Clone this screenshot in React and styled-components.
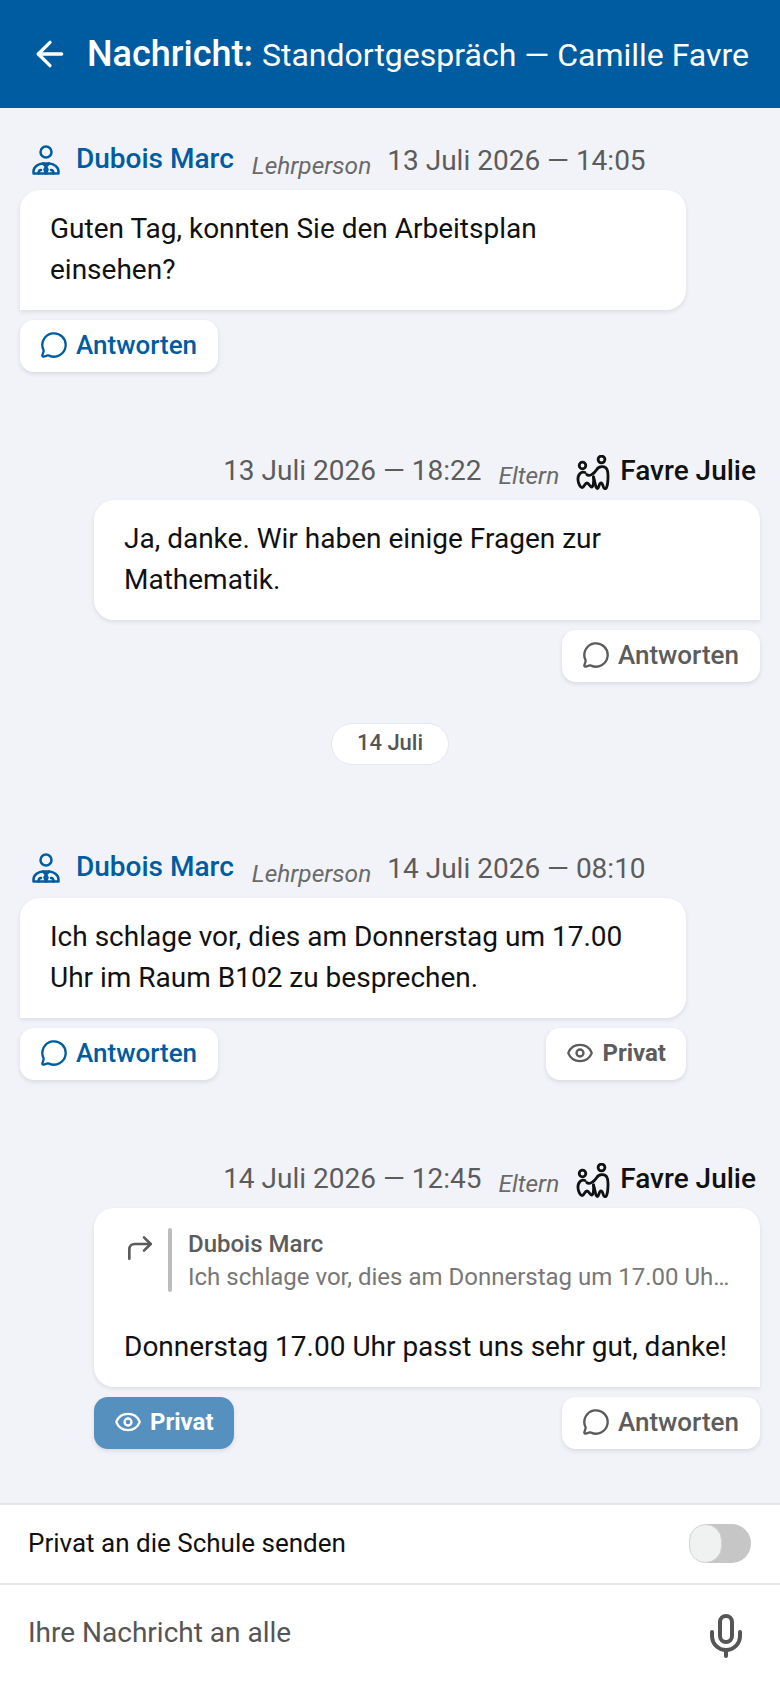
import React from 'react';
import styled, { createGlobalStyle } from 'styled-components';
import { ArrowLeft, CornerUpRight, Eye, MessageCircle, Mic } from 'lucide-react';

const GlobalStyle = createGlobalStyle`
  * { box-sizing: border-box; }
  html, body { margin: 0; padding: 0; }
  body {
    font-family: Roboto, "Liberation Sans", sans-serif;
    background: #f1f3f8;
  }
`;

const Page = styled.div`
  width: 780px;
  height: 1688px;
  display: flex;
  flex-direction: column;
  overflow: hidden;
  background: #f1f3f8;
`;

const Header = styled.header`
  height: 108px;
  flex: none;
  display: flex;
  align-items: center;
  gap: 17px;
  padding: 0 0 0 30px;
  background: #005ca1;
  color: #fff;
`;

const Title = styled.div`
  font-size: 32px;
  white-space: nowrap;
  b {
    font-size: 36px;
    font-weight: 500;
    margin-right: 9px;
  }
`;

const Thread = styled.main`
  flex: 1;
  padding: 32px 20px 0;
  display: flex;
  flex-direction: column;
`;

const Message = styled.section`
  width: 666px;
  align-self: ${(p) => (p.$mine ? 'flex-end' : 'flex-start')};
  margin-bottom: ${(p) => p.$gap}px;
`;

const MetaRow = styled.div`
  height: 40px;
  display: flex;
  align-items: center;
  justify-content: ${(p) => (p.$mine ? 'flex-end' : 'flex-start')};
  padding: ${(p) => (p.$mine ? '0 4px 0 0' : '0 0 0 12px')};
  white-space: nowrap;
`;

const Author = styled.span`
  font-size: 28px;
  font-weight: 500;
  color: ${(p) => (p.$mine ? '#111' : '#005ca1')};
  margin: ${(p) => (p.$mine ? '0 0 0 10px' : '0 0 4px 16px')};
`;

const Role = styled.span`
  font-size: 24.5px;
  font-style: italic;
  color: #6a6a6a;
  position: relative;
  top: 5px;
  margin: ${(p) => (p.$mine ? '0 17px 0 17px' : '0 16px 0 18px')};
`;

const Stamp = styled.span`
  font-size: 28px;
  color: #5c5c5c;
`;

const Bubble = styled.div`
  margin-top: 10px;
  padding: 18px 30px 20px;
  background: #fff;
  border-radius: 20px;
  ${(p) => (p.$mine ? 'border-bottom-right-radius: 0;' : 'border-bottom-left-radius: 0;')}
  box-shadow: 0 2px 4px rgba(30, 40, 70, 0.1);
  font-size: 28px;
  line-height: 41px;
  color: #111;
`;

const Actions = styled.div`
  margin-top: 10px;
  display: flex;
  justify-content: ${(p) => p.$justify};
`;

const ActionButton = styled.button`
  height: 52px;
  display: flex;
  align-items: center;
  gap: 8px;
  padding: ${(p) => (p.$small ? '0 20px 2px' : '0 21px 2px 20px')};
  border: 0;
  border-radius: 14px;
  font-family: inherit;
  font-size: ${(p) => (p.$small ? 24 : 26)}px;
  font-weight: ${(p) => (p.$small ? 700 : 500)};
  color: ${(p) => (p.$active ? '#fff' : p.$color)};
  background: ${(p) => (p.$active ? '#5590bf' : '#fff')};
  box-shadow: 0 2px 4px rgba(30, 40, 70, 0.12);
`;

const DayPill = styled.div`
  align-self: center;
  width: 118px;
  height: 42px;
  margin: 0 0 83px;
  padding-bottom: 3px;
  display: flex;
  align-items: center;
  justify-content: center;
  background: #fff;
  border: 1px solid #e6e8ee;
  border-radius: 21px;
  font-size: 22px;
  font-weight: 500;
  color: #555;
`;

const Quote = styled.div`
  display: flex;
  align-items: flex-start;
  margin: 2px -4px 32px 0;
  color: #5c5c5c;
`;

const QuoteArrow = styled(CornerUpRight)`
  flex: none;
  margin-top: 4px;
`;

const QuoteBar = styled.div`
  flex: none;
  width: 4px;
  height: 64px;
  margin: 0 16px 0 12px;
  background: #bcbcbc;
  border-radius: 2px;
`;

const QuoteBody = styled.div`
  min-width: 0;
  flex: 1;
  font-size: 24px;
  line-height: 33px;
`;

const QuoteName = styled.div`
  font-weight: 500;
`;

const QuoteText = styled.div`
  color: #777;
  white-space: nowrap;
  overflow: hidden;
  text-overflow: ellipsis;
`;

const Footer = styled.footer`
  flex: none;
  background: #fff;
`;

const ToggleRow = styled.div`
  height: 82px;
  display: flex;
  align-items: center;
  justify-content: space-between;
  padding: 0 29px 2px 28px;
  border-top: 2px solid #e5e6ea;
  border-bottom: 2px solid #e5e6ea;
  font-size: 26px;
  color: #111;
`;

const Toggle = styled.div`
  width: 62px;
  height: 39px;
  border-radius: 20px;
  background: #c6c6c6;
  position: relative;
`;

const ToggleKnob = styled.div`
  position: absolute;
  left: 0;
  top: 0;
  width: 33px;
  height: 39px;
  border-radius: 20px;
  background: #f0f2f2;
  border: 1px solid #d2d2d2;
`;

const InputRow = styled.div`
  height: 103px;
  display: flex;
  align-items: center;
  justify-content: space-between;
  padding: 0 30px 8px 28px;
  font-size: 28px;
  color: #555;
`;

const MicIcon = styled(Mic)`
  margin-top: 7px;
`;

const ParentSvg = styled.svg`
  flex: none;
  margin-top: 6px;
`;

const TeacherIcon = () => (
  <svg width="28" height="30" viewBox="0 0 28 30" fill="none" stroke="#005ca1" strokeWidth="2.5" strokeLinejoin="round" strokeLinecap="round">
    <circle cx="14" cy="7" r="5.5" />
    <path d="M1.5 28.500v-2c0-4.500 5-8 9.500-8h6c4.500 0 9.500 3.500 9.500 8v2z" />
    <path d="M11 18.500l3 3 3-3M14 21.500l-1.500 3 1.500 4 1.500-4z" />
    <path d="M6.500 28.500c0-2 .800-3.500 2.500-3.500M21.500 28.500c0-2-.800-3.500-2.500-3.500" />
  </svg>
);

const ParentIcon = () => (
  <ParentSvg width="34" height="36" viewBox="0 0 34 36" fill="none" stroke="#111" strokeWidth="2.8" strokeLinecap="round" strokeLinejoin="round">
    <circle cx="6.500" cy="10.500" r="3.300" />
    <circle cx="25.500" cy="4.500" r="3.400" />
    <path d="M10.800 19.500C13 22 18 19 20.800 14.500C22.500 11.500 29 10 31 14.500C33 19 31.500 30 31 31C30.500 33.500 29.500 34 28.500 33.500C27 33 27 28 25 28C23 28 23 33 21.500 33.500C19.500 34 19 26 17.500 22" />
    <path d="M9 17.500C5 16 1.500 20 2 25C2.200 28.500 4.500 33 6.500 32.500C8 32 9 28 11 28C13 28 14 32 15.500 32C17.500 32 18 26 17.500 22" />
  </ParentSvg>
);

const Meta = ({ mine, name, role, stamp }) => (
  <MetaRow $mine={mine}>
    {mine ? (
      <>
        <Stamp>{stamp}</Stamp>
        <Role $mine>{role}</Role>
        <ParentIcon />
        <Author $mine>{name}</Author>
      </>
    ) : (
      <>
        <TeacherIcon />
        <Author>{name}</Author>
        <Role>{role}</Role>
        <Stamp>{stamp}</Stamp>
      </>
    )}
  </MetaRow>
);

const Reply = ({ color }) => (
  <ActionButton $color={color}>
    <MessageCircle size={28} strokeWidth={2} />
    Antworten
  </ActionButton>
);

const Private = ({ active }) => (
  <ActionButton $small $active={active} $color="#5c5c5c">
    <Eye size={28} strokeWidth={2} />
    Privat
  </ActionButton>
);

const App = () => (
  <Page>
    <GlobalStyle />
    <Header>
      <ArrowLeft size={40} strokeWidth={2} />
      <Title>
        <b>Nachricht:</b>Standortgespräch — Camille Favre
      </Title>
    </Header>
    <Thread>
      <Message $gap={78}>
        <Meta name="Dubois Marc" role="Lehrperson" stamp="13 Juli 2026 — 14:05" />
        <Bubble>
          Guten Tag, konnten Sie den Arbeitsplan
          <br />
          einsehen?
        </Bubble>
        <Actions $justify="flex-start">
          <Reply color="#005ca1" />
        </Actions>
      </Message>
      <Message $mine $gap={41}>
        <Meta mine name="Favre Julie" role="Eltern" stamp="13 Juli 2026 — 18:22" />
        <Bubble $mine>
          Ja, danke. Wir haben einige Fragen zur
          <br />
          Mathematik.
        </Bubble>
        <Actions $justify="flex-end">
          <Reply color="#5c5c5c" />
        </Actions>
      </Message>
      <DayPill>14 Juli</DayPill>
      <Message $gap={78}>
        <Meta name="Dubois Marc" role="Lehrperson" stamp="14 Juli 2026 — 08:10" />
        <Bubble>
          Ich schlage vor, dies am Donnerstag um 17.00
          <br />
          Uhr im Raum B102 zu besprechen.
        </Bubble>
        <Actions $justify="space-between">
          <Reply color="#005ca1" />
          <Private />
        </Actions>
      </Message>
      <Message $mine $gap={0}>
        <Meta mine name="Favre Julie" role="Eltern" stamp="14 Juli 2026 — 12:45" />
        <Bubble $mine>
          <Quote>
            <QuoteArrow size={32} strokeWidth={2} />
            <QuoteBar />
            <QuoteBody>
              <QuoteName>Dubois Marc</QuoteName>
              <QuoteText>Ich schlage vor, dies am Donnerstag um 17.00 Uhr im Raum B102 zu besprechen.</QuoteText>
            </QuoteBody>
          </Quote>
          Donnerstag 17.00 Uhr passt uns sehr gut, danke!
        </Bubble>
        <Actions $justify="space-between">
          <Private active />
          <Reply color="#5c5c5c" />
        </Actions>
      </Message>
    </Thread>
    <Footer>
      <ToggleRow>
        Privat an die Schule senden
        <Toggle>
          <ToggleKnob />
        </Toggle>
      </ToggleRow>
      <InputRow>
        Ihre Nachricht an alle
        <MicIcon size={48} strokeWidth={2} />
      </InputRow>
    </Footer>
  </Page>
);

export default App;
